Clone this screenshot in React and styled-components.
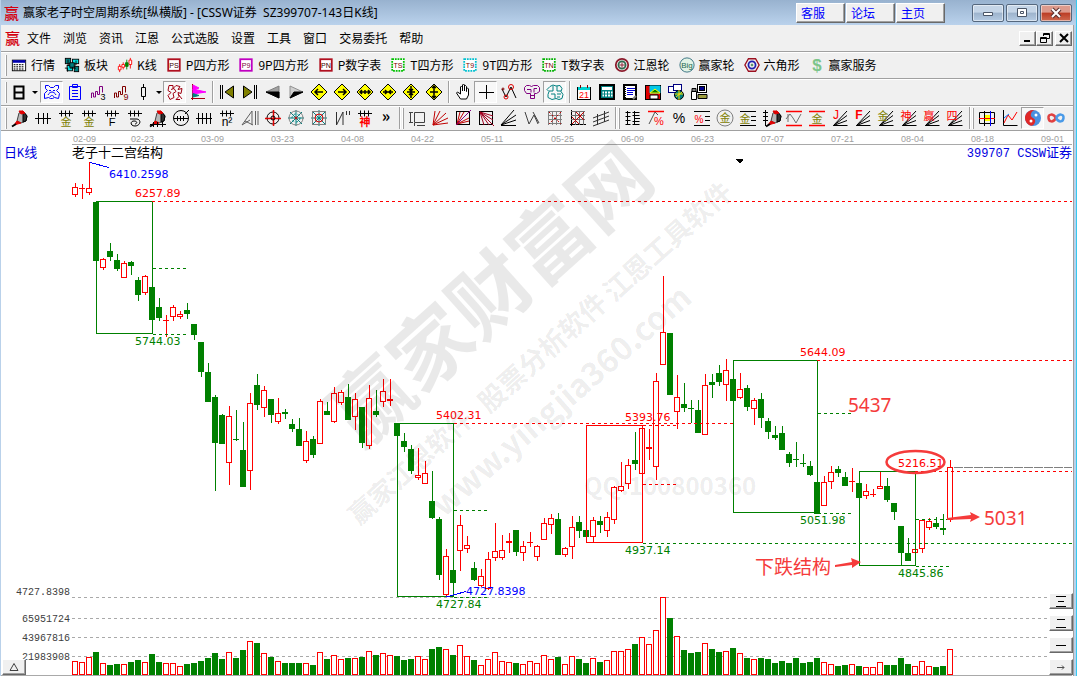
import React, { useState } from 'react';
import styled, { createGlobalStyle, css } from 'styled-components';

const GREEN = '#008000';
const RED = '#ff0000';
const MARK = '#f53b3b';
const GRID = '#a9a9a9';
const SANS = '"Liberation Sans", "Noto Sans CJK SC", sans-serif';

const GlobalStyle = createGlobalStyle`
  * { box-sizing: border-box; }
  html, body, #root { height: 100%; }
  body {
    margin: 0;
    overflow: hidden;
    background: #b9d1ea;
    font-family: "Noto Sans CJK SC", sans-serif;
    font-size: 12px;
    line-height: 16px;
    color: #000;
  }
  button { font: inherit; color: inherit; padding: 0; margin: 0; }
`;

const Frame = styled.div`
  display: flex;
  flex-direction: column;
  min-height: 100vh;
  border-left: 1px solid #b9d1ea;
  border-right: 1px solid #35c9f0;
`;

const TitleBar = styled.header`
  display: flex;
  align-items: center;
  height: 25px;
  padding: 0 4px 0 3px;
  background: linear-gradient(#98b2cf, #bad2ec);
`;

const Seal = styled.span`
  flex: none;
  width: 15px;
  margin-right: 4px;
  font-family: "Noto Sans CJK SC", sans-serif;
  font-size: 15px;
  font-weight: 500;
  color: #d4000f;
`;

const Title = styled.h1`
  flex: 1;
  margin: 0;
  font-family: "Noto Sans", "Noto Sans CJK SC", sans-serif;
  font-size: 12px;
  font-weight: normal;
  white-space: pre;
`;

const raised = css`
  background: #f0f0f0;
  border: 1px solid;
  border-color: #fff #696969 #696969 #fff;
  box-shadow: inset -1px -1px 0 #a0a0a0;
`;

const LinkButtons = styled.nav`
  display: flex;
  gap: 1px;
  margin-right: 27px;
`;

const LinkButton = styled.a`
  ${raised}
  width: 49px;
  height: 20px;
  padding: 1px 4px;
  color: #0000ff;
  text-decoration: none;
`;

const WindowButtons = styled.div`
  display: flex;
  gap: 2px;
`;

const WindowButton = styled.button`
  display: flex;
  align-items: center;
  justify-content: center;
  width: 32px;
  height: 18px;
  border: 1px solid #55677d;
  border-radius: 2px;
  box-shadow: inset 0 0 0 1px rgba(255, 255, 255, 0.5);
  background: ${(p) =>
    p.$close
      ? 'linear-gradient(#dd9a8c 45%, #bb3c24 50%, #cf6a50)'
      : 'linear-gradient(#c5d5e7 45%, #9db3cc 50%, #b5cbe3)'};
`;

const Body = styled.div`
  display: flex;
  flex-direction: column;
  flex: 1;
  margin-right: 2px;
  border-right: 1px solid #a0a0a0;
  background: #f0f0f0;
`;

const MenuBar = styled.nav`
  display: flex;
  align-items: center;
  height: 26px;
  padding: 0 1px 0 4px;
`;

const MenuItem = styled.button`
  border: 0;
  background: none;
  margin: 0 6px;
  white-space: nowrap;
`;

const Menus = styled.div`
  display: flex;
  flex: 1;
  margin-left: -3px;
`;

const ChildButtons = styled.div`
  display: flex;
`;

const ChildButton = styled.button`
  ${raised}
  display: flex;
  align-items: center;
  justify-content: center;
  width: 17px;
  height: 15px;
  margin-left: ${(p) => (p.$apart ? 2 : 0)}px;
`;

const ToolRow = styled.div`
  display: flex;
  align-items: center;
  height: ${(p) => p.$height || 27}px;
  padding-left: 4px;
  border-top: 1px solid #a0a0a0;
  box-shadow: inset 0 1px 0 #fff;
`;

const Grip = styled.i`
  flex: none;
  width: 2px;
  height: 21px;
  margin-right: 1px;
  border-left: 1px solid #fff;
  border-right: 1px solid #a0a0a0;
`;

const Divider = styled.i`
  flex: none;
  width: 2px;
  height: 22px;
  margin: 0 1px 0 3px;
  border-left: 1px solid #a0a0a0;
  border-right: 1px solid #fff;
`;

const Shortcut = styled.button`
  display: flex;
  flex: none;
  align-items: center;
  gap: 4px;
  margin-right: 9px;
  border: 0;
  background: none;
  white-space: nowrap;

  ${Grip} + & { margin-left: 3px; }
`;

const Tool = styled.button`
  display: flex;
  flex: none;
  align-items: center;
  justify-content: center;
  gap: 4px;
  width: ${(p) => p.$width || 23}px;
  height: 22px;
  border: 1px solid transparent;
  background: none;
  ${(p) =>
    p.$on &&
    css`
      background: #f8f8f8;
      border-color: #a0a0a0 #fff #fff #a0a0a0;
    `};
`;

const More = styled(Tool)`
  padding-bottom: 6px;
  font-size: 16px;
  font-weight: bold;
`;

const Glyph = styled.svg`
  flex: none;
  width: ${(p) => p.$size || 18}px;
  height: ${(p) => p.$size || 18}px;
  fill: none;
  stroke: #000;
  overflow: visible;

  text {
    stroke: none;
    font-family: ${SANS};
    text-anchor: middle;
  }
`;

const Caret = styled.i`
  border: 3px solid transparent;
  border-top-color: #000;
  border-bottom: 0;
`;

const ChartPanel = styled.main`
  position: relative;
  flex: 1;
  min-height: 546px;
  border-top: 1px solid #a0a0a0;
  background: #fff;
`;

const Plot = styled.svg`
  display: block;
  width: 100%;
  height: 545px;
  overflow: visible;
  shape-rendering: crispEdges;
`;

const PriceLabel = styled.text`
  font-family: "DejaVu Sans", sans-serif;
  font-size: 11px;
`;

const DateLabel = styled.text`
  font-family: "Liberation Sans", sans-serif;
  font-size: 9px;
  fill: #a0a0a0;
`;

const ScaleLabel = styled.text`
  font-family: "Liberation Mono", monospace;
  font-size: 10px;
  text-anchor: end;
  fill: #404040;
`;

const Note = styled.text`
  font-family: "Noto Sans", "Noto Sans CJK SC", sans-serif;
  font-size: 19px;
  fill: ${MARK};
`;

const Watermark = styled.text`
  font-family: "Noto Sans CJK SC", sans-serif;
  font-size: ${(p) => p.$size}px;
  font-weight: 700;
  fill: rgba(0, 0, 0, 0.085);
`;

const Caption = styled.div`
  position: absolute;
  top: 13px;
  right: 1px;
  left: 3px;
  display: flex;
  justify-content: space-between;
  font-family: "Liberation Mono", "Noto Sans CJK SC", monospace;
  font-size: 12px;
  color: #0000e0;

  b {
    font-size: 13px;
    font-weight: normal;
    font-family: "Noto Sans CJK SC", sans-serif;
  }
`;

const PaneButtons = styled.div`
  position: absolute;
  right: 0;
  bottom: 1px;
  display: flex;
  flex-direction: column;
  gap: 6px;
`;

const PaneButton = styled.button`
  ${raised}
  display: flex;
  align-items: center;
  justify-content: center;
  width: 24px;
  height: 16px;
`;

const FoldButton = styled(PaneButton)`
  position: absolute;
  bottom: 1px;
  left: 1px;
`;

const P = ({ d, c, w, f, dash }) => (
  <path d={d} stroke={c || '#000'} strokeWidth={w || 1} fill={f || 'none'} strokeDasharray={dash} />
);

const T = ({ x = 9, y, s = 11, c = '#000', w, children }) => (
  <text x={x} y={y} fontSize={s} fill={c} fontWeight={w}>{children}</text>
);

const square = (label, edge, ink) => (
  <>
    <rect x="2.5" y="2.5" width="13" height="13" fill="#fff" stroke={edge} strokeWidth="2" strokeDasharray={label[0] === 'T' ? '2 1' : undefined} />
    <T x={9} y={12} s={8} c={ink}>{label}</T>
  </>
);

const diamond = (arrow) => (
  <>
    <P d="M9 1 17 9 9 17 1 9z" f="#ffff00" />
    <P d={arrow} w={1.5} />
  </>
);

const ruler = <P d="M2 4.5h14M4.5 1.5v6M8.5 1.5v6M12.5 1.5v6" />;

const marker = (
  <>
    <P d="M6 12 8 4 12 2 16 7 15 12 10 14z" c="#404040" f="#b8b8b8" />
    <P d="M12 2 16 7 15 12 12 13z" f="#303030" />
    <P d="M8 2h4l2 2-4 1z" c="#e00000" f="#e00000" />
    <P d="M6 12 10 14 3 16z" c="#e00000" f="#e00000" />
    <P d="M1 17.500 5 15" w={2} />
  </>
);

const fan = (
  <P d="M2.5 16.5h14M2.5 16.5 16 11.5M2.5 16.5 16 6.5M2.5 16.5 16 2" />
);

const web = (
  <P d="M9 1v16M1 9h16M3 3l12 12M15 3 3 15" c="#008080" />
);

const icons = {
  quotes: (
    <>
      <rect x="1.5" y="3.5" width="15" height="12" fill="#fff" />
      <P d="M2 5h14" c="#0000b0" w={3} />
      <P d="M3 8.5h12M3 10.5h12M3 12.5h12M3 14.5h12" dash="2 1" />
    </>
  ),
  blocks: (
    <>
      <rect x="1.5" y="1.5" width="6" height="6" fill="#008080" />
      <rect x="9.5" y="2.5" width="7" height="5" fill="#00e5e5" />
      <rect x="3.5" y="9.5" width="6" height="6" fill="#00e5e5" />
      <rect x="11.5" y="10.5" width="5" height="6" fill="#008080" />
      <P d="M4.5 3v6h9V4M6.5 12.5h7M1 12.5h3v4" />
      <rect x="6.5" y="6.5" width="5" height="5" fill="#008080" />
    </>
  ),
  kline: (
    <>
      <P d="M3 8v9M7 6v8M15 1v12" c={RED} />
      <P d="M1.5 10.5h3v4h-3zM5.5 8.5h3v3h-3zM13.5 3.5h3v5h-3z" c={RED} f="#fff" />
      <P d="M11 3v11" c={GREEN} />
      <P d="M9.5 6.5h3v4h-3z" c={GREEN} f={GREEN} />
    </>
  ),
  ps: square('PS', '#b01020', '#400000'),
  p9: square('P9', '#c000c0', '#800040'),
  pn: square('PN', '#b01020', '#400000'),
  ts: square('TS', '#00c000', '#800000'),
  t9: square('T9', '#00c0d0', '#800000'),
  tn: square('TN', '#00b000', '#800000'),
  wheel: (
    <>
      <circle cx="9" cy="9" r="7" stroke="#8b1a2b" strokeWidth="2" />
      <circle cx="9" cy="9" r="4" stroke="#2f6b50" strokeWidth="2" />
      <P d="M9 6v6M6 9h6" c="#8b1a2b" />
    </>
  ),
  big: (
    <>
      <circle cx="9" cy="9" r="8" stroke="#2d6a7a" fill="#e2f3e6" />
      <T y={12.5} s={9} c="#1d6a50">Big</T>
    </>
  ),
  hexagon: (
    <>
      <P d="M5 2h8l4 7-4 7H5L1 9z" c="#9b1020" w={1.5} />
      <circle cx="9" cy="9" r="4" stroke="#2020b0" strokeWidth="2" />
      <circle cx="9" cy="9" r="1" stroke="#207040" />
    </>
  ),
  dollar: <T y={16} s={19} c="#7cc58a" w="bold">$</T>,

  day: <P d="M4.5 3.5h9v12h-9zM4.5 9.5h9" w={2} />,
  cloudBlue: (
    <>
      <P d="M2.500 5.500v-3h3l2 2h3l2-2h3v3l-2 2 3 3-1 5-4-1-2 1h-2l-2-1-4 1v-5l3-3z" c="#0000ff" />
      <P d="M5 12c2-4 6-4 8 0M7 14c1-2 3-2 4 0M6 7.500h2M10 7.500h2" c="#0000ff" />
    </>
  ),
  clipboard: <P d="M3.500 3.500h11v13h-11zM6.500 1.500h5v3h-5zM6 7.500h6M6 10.500h6M6 13.500h6" c="#0000ff" />,
  wave3: (
    <>
      <P d="M2.500 15v-5h2v4h2V8.500h2v3h2V3.500h3v6" c="#800080" />
      <T x={14} y={17} s={9}>3</T>
    </>
  ),
  wave9: (
    <>
      <P d="M2.500 15v-5h2v4h2V8.500h2v3h2V3.500h3v6" c="#800000" />
      <T x={14} y={17} s={9} c="#800000">9</T>
    </>
  ),
  candle: <P d="M9.500 1v3M9.500 14v3M7.500 4.500h4v9h-4z" />,
  swirl: <P d="M3 2.500h4v3l3-3 4 1-2 3 4-1-1 5-3-1 1 4-3 3 4 0M3 2.500l-1 5 3 2-3 3 2 4 4-2-1-4 3-2-2-3-3 1M12 11l4 5" c="#a00010" />,
  flags: (
    <>
      <P d="M3.500 1v16M2 15.500h14" c="#a00010" />
      <P d="M4 2 10 5 4 7z" c="#ff00ff" f="#ff00ff" />
      <P d="M4 6 17 9 4 11z" c="#ff00ff" f="#ff00ff" />
      <P d="M4 10.500 10 12.500 4 14z" c="#008080" f="#008080" />
    </>
  ),
  first: (
    <>
      <P d="M2.500 2v14M4.500 2v14" />
      <P d="M15.500 3v12L7 9z" f="#808000" />
    </>
  ),
  last: (
    <>
      <P d="M13.500 2v14M15.500 2v14" />
      <P d="M2.500 3v12L11 9z" f="#808000" />
    </>
  ),
  prev: (
    <>
      <P d="M15 3v12L2 9z" c="#808080" f="#a0a0a0" />
      <P d="M15 9v6L2 9z" f="#000" />
    </>
  ),
  next: (
    <>
      <P d="M3 3v12L16 9z" c="#909090" f="#d0d0d0" />
      <P d="M3 15 16 9 7 9z" f="#000" />
    </>
  ),
  left: diamond('M13 9H5M8 6 5 9l3 3'),
  right: diamond('M5 9h8M10 6l3 3-3 3'),
  spread: diamond('M4 9h10M6 7 4 9l2 2M12 7l2 2-2 2M9 7v4'),
  squeeze: diamond('M4 9h10M6 7l2 2-2 2M12 7l-2 2 2 2'),
  shrink: diamond('M9 3v12M7 6l2 2 2-2M7 12l2-2 2 2M5 9h8'),
  grow: diamond('M9 3v12M7 5l2-2 2 2M7 13l2 2 2-2M5 9h8'),
  hand: <P d="M6.500 16 2.500 10l1-1 3 2V4l1-1 1 1v4-6l1-1 1 1v6-5l1-.5 1 1v5-3l1-.5 1 1v6l-2 4z" f="#fff" />,
  cross: <P d="M9.500 2v14M2 9.500h15" />,
  nodes: (
    <>
      <P d="M2 6 6 14 11 4 16 15" />
      <circle cx="6" cy="14" r="2" stroke="#e00000" />
      <circle cx="11" cy="4" r="2.500" stroke="#e00000" />
      <circle cx="3" cy="6" r="1" stroke="#800000" />
    </>
  ),
  trees: <P d="M3.500 2.500h3l2 1 2-1h4l2 2v4l-3 2h-2v5h-4v-5h-4l-2-3v-3zM4 6.500h4v3M14 5.500h-3v4M8 12.500h3" c="#800080" />,
  cloudTeal: <P d="M4 3.500 7 2l3 1 4-.500 2 3-1 3 2 3-1 4-3 1-3-1-4 1-4-2 0-3 1-3-2-2zM7 3v5H3M11 3v5h4M5 11h4v4M11 11h4M11 14h3" c="#008080" />,
  calendar: (
    <>
      <rect x="2.500" y="4.500" width="13" height="12" fill="#fff" />
      <P d="M3 5.500h12" c="#00d0d0" w={3} />
      <P d="M5.500 2v3M12.500 2v3" c="#800000" />
      <T y={15} s={9} c="#ff0000">21</T>
    </>
  ),
  calculator: (
    <>
      <rect x="2" y="2" width="14" height="14" fill="#008080" strokeWidth="2" />
      <P d="M4 5.500h10" c="#fff" w={3} />
      <P d="M4.500 9.500h10M4.500 12.500h10" c="#fff" w={2} />
      <P d="M6.500 8v6M9.500 8v6M12.500 8v6" c="#008080" />
    </>
  ),
  notebook: (
    <>
      <rect x="3" y="2" width="12" height="14" fill="#fff" strokeWidth="2" />
      <P d="M6 5.500h8M6 7.500h8M6 9.500h6M6 11.500h6" c="#0000d0" />
      <P d="M4 2v14" dash="1" w={2} />
      <P d="M12 16 15 13" c="#808080" w={2} />
    </>
  ),
  save: (
    <>
      <rect x="1.500" y="2.500" width="15" height="14" fill="#e00000" />
      <P d="M6 3h10v7H6z" c="#00c8e8" f="#00c8e8" />
      <P d="M6 10 11 6 16 10z" c="#ffff00" f={GREEN} />
      <P d="M6 12h8v4H6z" f="#fff" />
    </>
  ),
  globe: (
    <>
      <rect x="1.500" y="3.500" width="9" height="6" fill="#fff" stroke="#000080" />
      <rect x="6.500" y="1.500" width="8" height="6" fill="#fff" stroke="#000080" />
      <circle cx="12" cy="12" r="4.500" fill="#008080" />
      <P d="M8 11h8M12 7v10M9 14l6-5" c="#ffe000" />
    </>
  ),
  devices: (
    <>
      <rect x="7.500" y="1.500" width="9" height="8" fill="#fff" />
      <rect x="9.500" y="3.500" width="5" height="4" fill="#000090" />
      <P d="M1.500 8.500h5v8h-5z" f="#fff" />
      <P d="M8 11.500h9v4H8z" f="#a0a040" />
      <P d="M2 5.500h4v3H2z" f="#808080" />
    </>
  ),

  marker,
  bars3: <P d="M1 9.500h16M4.500 4v11M9.500 4v11M13.500 4v11" />,
  gold1: <>{ruler}<T y={17} s={11} c="#808000">金</T></>,
  rulerF: <>{ruler}<T y={17} s={11}>F</T></>,
  rulerSpiral: <>{ruler}<P d="M4 10h7c5 1 3 7-2 7s-5-5-1-5 3 3 1 3" /></>,
  markerRuler: <>{marker}<P d="M1 15.500h16M4.500 13v5M8.500 13v5M13.500 13v5" /></>,
  dial: (
    <>
      <circle cx="9" cy="9" r="7.500" />
      <P d="M2 9.500h14M5.500 7v5M8.500 7v5M11.500 7v5M13 5l4-4" />
    </>
  ),
  bars4: <P d="M1 9.500h16M3.500 4v11M7.500 4v11M11.500 4v11M15.500 4v11" />,
  n2: <>{ruler}<T y={17} s={12}>n²</T></>,
  angles: <P d="M1 16 11 2v14M4 12l8 4M14.500 2v14M1 16l8-5M17 2v14" c="#606060" />,
  target: (
    <>
      <circle cx="9" cy="9" r="6" />
      <P d="M9.500 1v16M1 9.500h16" c="#e00000" w={1.5} />
      <circle cx="9" cy="9" r="2" />
    </>
  ),
  webRound: (
    <>
      {web}
      <circle cx="9" cy="9" r="7" stroke="#808080" />
      <circle cx="9" cy="9" r="4" stroke="#008080" strokeDasharray="2" />
      <circle cx="9" cy="9" r="1" stroke="#e00000" />
    </>
  ),
  webSquare: (
    <>
      {web}
      <rect x="2.500" y="2.500" width="13" height="13" stroke="#808080" />
      <circle cx="9" cy="9" r="4" stroke="#e00000" />
    </>
  ),
  slashes: <P d="M3.500 3v13L10 3v13M13.500 2v4M16.500 2v4" c="#303030" />,
  spirit: <>{ruler}<T y={17} s={11} c="#ff0000" w="bold">神</T></>,

  frameRuler: <P d="M6.500 3.500h10v10h-10zM1 3.500h4M2.500 3v11M1 13.500h4M6.500 14v3M9 16.500h8" c="#404040" />,
  fanRed: <P d="M2 16 4 2M2 16 9 2M2 16 15 4M2 16 17 9M2 16 17 14" c="#c00000" />,
  fanBox: (
    <>
      <rect x="2.500" y="2.500" width="13" height="13" />
      <P d="M3 15 6 3M3 15 10 3M3 15 15 9M3 15 15 12" c="#c00000" />
      <P d="M2 16 17 1" c="#800080" />
    </>
  ),
  fanBoxBack: (
    <>
      <rect x="2.500" y="2.500" width="13" height="13" />
      <P d="M3 3 7 16M3 3 12 16M3 3 17 17M3 3 16 11M3 3 16 7" c="#a00020" />
    </>
  ),
  fanBlack: <P d="M1 16.500h15M1 16 16 11M1 16 16 6M1 16 14 1" />,
  zigzag: <P d="M2 3 6 15 11 6 15 15M10 3 16 14" c="#404040" />,
  gridRed: (
    <>
      <P d="M2.500 2v14M6.500 2v14M10.500 2v14M14.500 2v14M2 2.500h14M2 6.500h14M2 10.500h14M2 14.500h14" c="#808080" />
      <P d="M3 3 15 15M15 3 3 15" c="#c00000" dash="2" />
    </>
  ),
  gridBlack: (
    <>
      <P d="M2.500 1v16M1 15.500h16" />
      <P d="M6.500 2v14M10.500 2v14M14.500 2v14M2 2.500h14M2 6.500h14M2 10.500h14" c="#707070" />
      <P d="M3 15 15 3M3 8 10 15M7 3l8 8" c="#c00000" />
    </>
  ),
  channel: <P d="M1 9 17 3M1 13 17 7M1 17 17 11M5.500 5v11M12.500 2v11" c="#303030" />,

  list: <P d="M3.500 2v14M1.500 3.500h5M1.500 7.500h5M1.500 11.500h5M1.500 15.500h5M10.500 2v14M8.500 3.500h7M8.500 6.500h7M10 9.500h6M8.500 12.500h7M8.500 15.500h7" />,
  percentTrend: (
    <>
      <P d="M1 2.500h16" c="#ff0000" w={1.5} />
      <P d="M2 15 8 3 11 6" c="#505050" />
      <T x={12} y={16} s={11} c="#ff0000">%</T>
    </>
  ),
  percent: <T y={14} s={14}>%</T>,
  percentLines: (
    <>
      <P d="M1 2.500h16M12 7.500h5M12 11.500h5M1 16.500h16" />
      <T x={6} y={14} s={10} c="#ff0000">%</T>
    </>
  ),
  goldRing: (
    <>
      <circle cx="9" cy="9" r="8" stroke="#808080" />
      <T y={13} s={11} c="#808000">金</T>
    </>
  ),
  goldLines: (
    <>
      <P d="M1 2.500h16M12 7.500h5M12 11.500h5M1 16.500h16" />
      <T x={6} y={14} s={11} c="#808000">金</T>
    </>
  ),
  rulerPen: <><P d="M3.500 1v16M1 3.500h5M1 7.500h5M1 11.500h5" /><g transform="translate(3 0)">{marker}</g></>,
  waveLines: (
    <>
      <P d="M1 2.500h16M1 16.500h16" c="#ff0000" w={1.5} />
      <P d="M1 10 5 5 8 9 11 14 16 5M3 5v8" c="#707070" />
    </>
  ),
  goldRed: (
    <>
      <P d="M1 2.500h16M1 16.500h16" c="#ff0000" w={1.5} />
      <T y={14} s={11} c="#808000">金</T>
    </>
  ),
  fanJ: <>{fan}<T x={5} y={10} s={12} c="#ff0000">J</T></>,
  fanF: <>{fan}<T x={5} y={10} s={12} c="#ff0000" w="bold">F</T></>,
  fanGold: <>{fan}<T x={6} y={11} c="#808000">金</T></>,
  fanSpirit: <>{fan}<T x={6} y={11} c="#ff0000">神</T></>,
  fanWin: <>{fan}<T x={6} y={11} c="#ff0000">赢</T></>,
  fanFour: <>{fan}<T x={6} y={11} c="#ff0000">四</T></>,

  panes: (
    <>
      <rect x="6" y="6" width="6" height="6" fill="#ffff00" stroke="none" />
      <P d="M1.500 3.500h15v11h-15zM6.500 2v15" />
      <P d="M1 9.500h16" c="#ff0000" />
      <P d="M12.500 2v15" c="#0000ff" />
    </>
  ),
  trend: (
    <>
      <P d="M2.500 1v15.500h14" />
      <P d="M3 14 7 6 11 11 16 3" c="#ff0000" />
      <P d="M3 9 8 5" c="#0080ff" />
    </>
  ),
  taiji: (
    <>
      <circle cx="9" cy="9" r="8" fill="#4a90e0" stroke="none" />
      <path d="M13 2A8 8 0 1 0 5 16 4 4 0 0 0 9 9 4 4 0 0 1 13 2z" fill="#e02828" stroke="none" />
      <circle cx="7" cy="12" r="1.500" fill="#fff" stroke="none" />
      <circle cx="12" cy="6" r="1.500" fill="#fff" stroke="none" />
    </>
  ),
  infinity: (
    <>
      <P d="M9 9C6 4 1 5 1.500 9S6 14 9 9" c="#e04040" w={2.5} />
      <P d="M9 9c3-5 8-4 7.500 0S12 14 9 9" c="#4a9ae8" w={2.5} />
    </>
  ),
};

const menus = ['文件', '浏览', '资讯', '江恩', '公式选股', '设置', '工具', '窗口', '交易委托', '帮助'];

const shortcuts = [
  ['quotes', '行情'], ['blocks', '板块'], ['kline', 'K线'], ['ps', 'P四方形'], ['p9', '9P四方形'],
  ['pn', 'P数字表'], ['ts', 'T四方形'], ['t9', '9T四方形'], ['tn', 'T数字表'], ['wheel', '江恩轮'],
  ['big', '赢家轮'], ['hexagon', '六角形'], ['dollar', '赢家服务'],
];

const viewTools = [
  'day', 'cloudBlue', 'clipboard', 'wave3', 'wave9', 'candle', 'swirl', 'flags', '|',
  'first', 'last', 'prev', 'next', 'left', 'right', 'spread', 'squeeze', 'shrink', 'grow', '|',
  'hand', 'cross', 'nodes', 'trees', 'cloudTeal', '|',
  'calendar', 'calculator', 'notebook', 'save', 'globe', 'devices',
];

const drawTools = [
  'marker', 'bars3', 'gold1', 'gold1', 'rulerF', 'rulerSpiral', 'markerRuler', 'dial', 'bars4', 'n2',
  'angles', 'target', 'webRound', 'webSquare', 'slashes', 'spirit', '»', '|',
  'frameRuler', 'fanRed', 'fanBox', 'fanBoxBack', 'fanBlack', 'zigzag', 'gridRed', 'gridBlack', 'channel', '|',
  'list', 'percentTrend', 'percent', 'percentLines', 'goldRing', 'goldLines', 'rulerPen', 'waveLines',
  'goldRed', 'fanJ', 'fanF', 'fanGold', 'fanSpirit', 'fanWin', 'fanFour', '|',
  'panes', 'trend', 'taiji', 'infinity',
];

const combos = { day: 32, candle: 31 };

// one entry per day: colour, high, body top, body bottom, low, volume top
const days = `
r 183 187 195 197 661|r 184 188 189 199 662|r 162 188 193 195 657|g 202 202 261 261 652|r 258 259 268 270 663
g 243 251 257 261 665|g 254 260 269 271 664|r 261 263 278 278 664|g 261 262 266 275 662|g 277 280 295 301 660
r 275 276 293 295 662|g 287 287 320 320 654|g 298 307 318 321 662|r 315 320 321 337 663|r 305 307 317 321 663
r 311 314 317 319 666|g 303 310 314 319 664|g 324 324 335 340 663|g 342 342 372 377 661|g 363 372 402 402 658
g 395 397 443 491 653|g 414 415 444 444 659|r 406 416 463 485 652|g 410 439 440 441 658|g 422 450 487 487 650
r 393 403 471 490 641|g 374 385 405 410 643|r 386 390 408 417 653|g 399 399 415 423 657|r 398 413 422 424 661
g 409 412 414 419 663|g 419 424 429 432 663|g 418 429 446 446 663|r 431 441 461 463 663|g 436 439 455 458 665
r 399 401 444 444 652|g 402 411 415 415 659|r 387 393 422 423 655|r 390 392 403 405 659|g 384 397 420 420 658
r 393 399 417 430 658|g 407 407 443 448 657|r 385 398 446 449 651|g 390 411 415 417 655|r 379 391 402 407 653
r 379 399 401 406 655|g 423 423 436 436 656|g 433 441 447 452 660|g 445 449 471 474 659|r 448 475 478 480 656
r 461 473 484 484 659|g 471 501 518 519 649|g 517 519 575 580 647|r 549 556 595 597 649|g 570 570 583 597 655
r 515 525 551 571 645|r 536 545 549 553 656|g 562 568 580 581 660|r 569 576 586 587 665|r 552 559 589 590 659
r 523 551 558 561 652|r 535 550 558 560 661|r 533 541 543 553 662|g 530 530 552 556 663|r 541 546 553 561 664
r 532 542 543 547 661|r 545 546 557 561 663|r 518 523 540 540 655|r 514 518 525 534 659|g 513 519 555 555 657
r 547 548 555 557 664|r 516 527 547 559 656|g 516 522 531 538 659|g 530 530 537 537 663|r 517 520 537 542 658
g 516 521 525 533 662|r 512 517 531 537 660|r 486 487 520 524 651|r 462 486 491 492 651|r 459 465 484 489 649
g 432 460 464 470 644|r 428 428 474 474 637|r 429 447 449 460 644|r 373 381 467 480 630|r 276 332 365 365 597
g 333 333 395 395 618|r 375 397 412 429 636|g 383 404 408 412 650|g 400 408 409 423 653|g 400 410 433 433 652
r 374 385 435 435 643|g 374 382 385 398 649|g 365 373 382 386 652|r 359 370 385 401 651|g 379 379 401 401 648
r 373 389 398 399 653|g 385 388 407 411 658|r 398 400 409 425 659|g 393 399 418 428 658|g 418 421 432 439 659
g 426 435 438 440 663|g 426 433 450 450 661|g 452 454 463 467 663|g 442 459 460 467 658|g 454 463 464 467 663
g 461 466 475 476 662|g 482 482 514 514 658|r 476 482 506 506 662|r 466 472 482 489 664|g 466 469 473 477 666
g 472 477 486 486 665|r 468 481 482 492 664|g 483 483 498 498 666|r 484 491 496 499 667|r 489 494 495 497 667
r 471 486 489 489 662|g 478 486 500 502 665|g 503 503 512 520 665|g 526 526 553 565 658|g 538 553 561 561 664
r 546 549 553 558 666|r 519 520 549 553 661|r 518 521 528 530 666|g 517 523 527 529 667|g 514 528 530 535 666
r 460 467 520 522 649`
  .trim()
  .split(/[|\n]/)
  .map((row) => {
    const [color, ...n] = row.split(' ');
    return [color, ...n.map(Number)];
  });

const dates = [
  '02-09', '02-23', '03-09', '03-23', '04-08', '04-22', '05-11', '05-25',
  '06-09', '06-23', '07-07', '07-21', '08-04', '08-18', '09-01',
];

const boxes = [
  [96, 201, 152, 333, GREEN],
  [397, 423, 453, 596, GREEN],
  [586, 425, 642, 542, RED],
  [733, 360, 817, 512, GREEN],
  [859, 471, 915, 565, GREEN],
];

const levels = [
  [152, '100%', 201, RED], [153, 186, 268, GREEN], [153, 186, 334, GREEN],
  [454, 733, 423, RED], [454, 487, 510, GREEN], [454, 487, 597, GREEN],
  [643, 677, 425, RED], [643, 677, 484, RED], [643, '100%', 543, GREEN],
  [817, '100%', 360, RED], [818, 851, 413, GREEN], [818, 851, 513, GREEN],
  [915, '100%', 471, RED], [916, 949, 519, GREEN], [916, 949, 566, GREEN],
];

const prices = [
  [109, 178, '6410.2598', '#0000ff'], [135, 197, '6257.89', RED], [135, 345, '5744.03', GREEN],
  [436, 419, '5402.31', RED], [466, 595, '4727.8398', '#0000ff'], [436, 608, '4727.84', GREEN],
  [625, 421, '5393.76', RED], [625, 554, '4937.14', GREEN], [800, 356, '5644.09', RED],
  [800, 524, '5051.98', GREEN], [898, 467, '5216.51', RED], [898, 577, '4845.86', GREEN],
];

const scale = [
  [597, 595, '4727.8398'], [618, 622, '65951724'], [637, 641, '43967816'], [656, 660, '21983908'],
];

const Bar = ({ x, top, bottom, color }) => {
  const ink = color === 'r' ? RED : GREEN;
  if (color === 'g' || bottom - top < 3) {
    return <rect x={x} y={top} width="6" height={bottom - top} fill={ink} />;
  }
  return <rect x={x + 0.5} y={top + 0.5} width="5" height={bottom - top - 1} fill="#fff" stroke={ink} />;
};

const Day = ({ index, data }) => {
  const [color, high, top, bottom, low, volume] = data;
  const x = 72 + index * 7;
  return (
    <g>
      <rect x={x + 3} y={high} width="1" height={low - high} fill={color === 'r' ? RED : GREEN} />
      <Bar x={x} top={top} bottom={bottom} color={color} />
      <Bar x={x} top={volume} bottom={675} color={color} />
    </g>
  );
};

const Chart = () => (
  <Plot role="img" aria-label="日K线">
    {/* coordinates count from the window corner */}
    <g transform="translate(-1 -131)">
      <line x1="72" x2="100%" y1="144.5" y2="144.5" stroke={GRID} />
      {dates.map((d, i) => (
        <DateLabel key={d} x={i === 0 ? 73 : 61 + i * 70} y="142">{d}</DateLabel>
      ))}
      {scale.map(([y, base, label]) => (
        <g key={label}>
          <line x1="72" x2="1048" y1={y + 0.5} y2={y + 0.5} stroke={GRID} strokeDasharray="3 3" />
          <ScaleLabel x="70" y={base}>{label}</ScaleLabel>
        </g>
      ))}
      <line x1="1" x2="100%" y1="675.5" y2="675.5" stroke={GRID} />

      {days.map((data, i) => <Day key={i} index={i} data={data} />)}

      {boxes.map(([x1, y1, x2, y2, color]) => (
        <rect key={x1} x={x1 + 0.5} y={y1 + 0.5} width={x2 - x1} height={y2 - y1} fill="none" stroke={color} />
      ))}
      {levels.map(([x1, x2, y, color]) => (
        <line key={`${x1}-${y}`} x1={x1} x2={x2} y1={y + 0.5} y2={y + 0.5} stroke={color} strokeDasharray="3 3" />
      ))}
      <line x1="954" x2="100%" y1="467.5" y2="467.5" stroke="#808080" strokeDasharray="9 1" />
      <path d="M90 162.500 109 167.500M446 597 466 591.500" stroke="#0000ff" fill="none" />
      <path d="M736 159h7v1l-3 3h-1l-3-3z" fill="#000" />

      {prices.map(([x, y, label, color]) => (
        <PriceLabel key={label} x={x} y={y} fill={color}>{label}</PriceLabel>
      ))}
      <text x="72" y="157" fontSize="13">老子十二宫结构</text>

      <Watermark $size={80} textAnchor="middle" transform="translate(510 316) rotate(-42)">赢家财富网</Watermark>
      <Watermark $size={26} transform="translate(359 526) rotate(-42)">赢家江恩软件</Watermark>
      <Watermark $size={27} transform="translate(489 414) rotate(-42)">股票分析软件</Watermark>
      <Watermark $size={27} transform="translate(614 303) rotate(-42)">江恩工具软件</Watermark>
      <Watermark $size={32} transform="translate(444 518) rotate(-41)">www.yingjia360.com</Watermark>
      <Watermark $size={24} x="584" y="495">QQ:100800360</Watermark>

      <g shapeRendering="geometricPrecision">
        <ellipse cx="915.500" cy="462" rx="29" ry="11" fill="none" stroke={MARK} strokeWidth="2.500" />
        <path d="M947 520v-2l24-3-1-3 10 5-10 5 1-3z" fill={MARK} />
        <path d="M835 567v-2l17-3-1-4 10 4-9 6v-3z" fill={MARK} />
      </g>
      <Note x="848" y="412">5437</Note>
      <Note x="984" y="525">5031</Note>
      <Note x="755" y="574">下跌结构</Note>
    </g>
  </Plot>
);

const Icon = ({ name, size }) => (
  <Glyph viewBox="0 0 18 18" $size={size} aria-hidden="true">{icons[name]}</Glyph>
);

const App = () => {
  const [active, setActive] = useState(['cloudBlue', 'swirl', 'cross', 'cloudTeal', 'taiji']);

  const toggle = (name) =>
    setActive(active.includes(name) ? active.filter((n) => n !== name) : [...active, name]);

  const renderTools = (names, grips) =>
    names.map((name, i) => {
      if (name === '|') {
        return (
          <React.Fragment key={i}>
            <Divider />
            {grips && <><Grip /><i /></>}
          </React.Fragment>
        );
      }
      if (name === '»') return <More key={i} $width={20} aria-label="更多">»</More>;
      return (
        <Tool
          key={i}
          $width={combos[name]}
          $on={active.includes(name)}
          aria-label={name}
          onClick={() => toggle(name)}
        >
          <Icon name={name} />
          {combos[name] && <Caret />}
        </Tool>
      );
    });

  return (
    <>
      <GlobalStyle />
      <Frame>
        <TitleBar>
          <Seal>赢</Seal>
          <Title>{'赢家老子时空周期系统[纵横版] - [CSSW证券  SZ399707-143日K线]'}</Title>
          <LinkButtons>
            <LinkButton href="#service">客服</LinkButton>
            <LinkButton href="#forum">论坛</LinkButton>
            <LinkButton href="#home">主页</LinkButton>
          </LinkButtons>
          <WindowButtons>
            <WindowButton aria-label="最小化">
              <Glyph $size={12} viewBox="0 0 12 12"><path d="M1.500 5.500h9v3h-9z" fill="#fff" stroke="#4a5566" /></Glyph>
            </WindowButton>
            <WindowButton aria-label="最大化">
              <Glyph $size={12} viewBox="0 0 12 12"><path d="M1.500 1.500h9v8h-9zM4.500 4.500h3v2h-3z" fill="#fff" stroke="#4a5566" /></Glyph>
            </WindowButton>
            <WindowButton $close aria-label="关闭">
              <Glyph $size={12} viewBox="0 0 12 12">
                <path d="M2 2l8 8M10 2l-8 8" stroke="#5a3030" strokeWidth="4" />
                <path d="M2 2l8 8M10 2l-8 8" stroke="#fff" strokeWidth="2" />
              </Glyph>
            </WindowButton>
          </WindowButtons>
        </TitleBar>

        <Body>
          <MenuBar>
            <Seal>赢</Seal>
            <Menus>
              {menus.map((m) => <MenuItem key={m}>{m}</MenuItem>)}
            </Menus>
            <ChildButtons>
              <ChildButton aria-label="最小化">
                <Glyph $size={10} viewBox="0 0 10 10"><path d="M1 8h6" strokeWidth="2" /></Glyph>
              </ChildButton>
              <ChildButton aria-label="还原">
                <Glyph $size={10} viewBox="0 0 10 10"><path d="M3.500 3V.500h6v5H7M3 1.500h6M.500 4.500h6v5h-6zM1 5.500h5" /></Glyph>
              </ChildButton>
              <ChildButton $apart aria-label="关闭">
                <Glyph $size={10} viewBox="0 0 10 10"><path d="M1 1l8 8M9 1 1 9" strokeWidth="2" /></Glyph>
              </ChildButton>
            </ChildButtons>
          </MenuBar>

          <ToolRow>
            <Grip />
            {shortcuts.map(([name, label]) => (
              <Shortcut key={name}>
                <Icon name={name} size={16} />
                {label}
              </Shortcut>
            ))}
          </ToolRow>
          <ToolRow>
            <Grip />
            {renderTools(viewTools)}
          </ToolRow>
          <ToolRow $height={25}>
            <Grip />
            {renderTools(drawTools, true)}
          </ToolRow>

          <ChartPanel>
            <Chart />
            <Caption>
              <span><b>日</b>K<b>线</b></span>
              <span>399707 CSSW<b>证券</b></span>
            </Caption>
            <FoldButton aria-label="展开">
              <Glyph $size={10} viewBox="0 0 10 10"><path d="M5 1.500 9 8.500H1z" stroke="#404040" /></Glyph>
            </FoldButton>
            <PaneButtons>
              <PaneButton aria-label="三图">
                <Glyph $size={12} viewBox="0 0 12 12"><path d="M1 1.500h10M3 6.500h6M1 11.500h10" /></Glyph>
              </PaneButton>
              <PaneButton aria-label="二图">
                <Glyph $size={12} viewBox="0 0 12 12"><path d="M2 2.500h8M1 10.500h10" /></Glyph>
              </PaneButton>
              <PaneButton aria-label="一图">
                <Glyph $size={12} viewBox="0 0 12 12"><path d="M1 6.500h10" /></Glyph>
              </PaneButton>
              <PaneButton aria-label="右移">
                <Glyph $size={12} viewBox="0 0 12 12"><path d="M2 6.500h7M7 4.500l2 2-2 2" stroke="#505050" /></Glyph>
              </PaneButton>
            </PaneButtons>
          </ChartPanel>
        </Body>
      </Frame>
    </>
  );
};

export default App;
